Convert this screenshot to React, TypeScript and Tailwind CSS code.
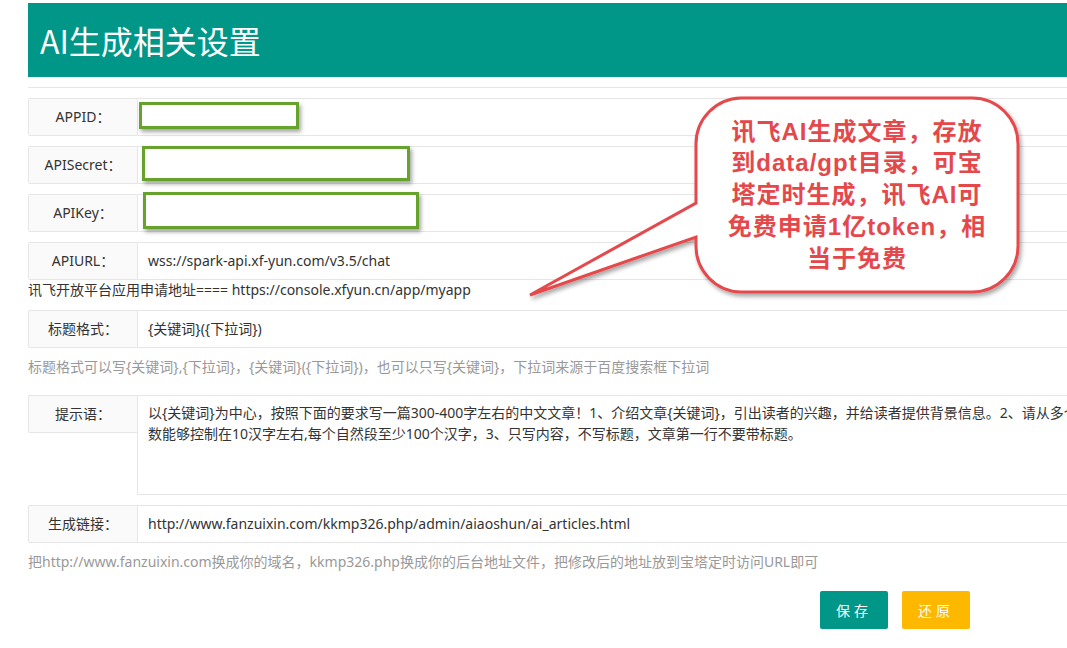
import React from "react";

const Row = ({
  label,
  value,
  overlay,
}: {
  label: string;
  value?: string;
  overlay?: string;
}) => (
  <div className="flex h-[38px] mb-[10px]">
    <div className="w-[110px] shrink-0 border border-[#e6e6e6] bg-[#fafafa] rounded-l-[2px] text-center leading-[36px] text-[14px] text-[#333]">
      {label}
    </div>
    <div className="relative flex-1 border border-l-0 border-[#e6e6e6] bg-white pl-[10px] leading-[36px] text-[14px] text-[#333]">
      {value}
      {overlay && (
        <div
          className={`absolute border-[3px] border-[#65a32d] bg-white shadow-[2px_3px_4px_rgba(0,0,0,0.35)] ${overlay}`}
        />
      )}
    </div>
  </div>
);

const Callout = () => (
  <>
    <svg
      className="absolute left-[520px] top-[90px] pointer-events-none"
      width="510"
      height="215"
      viewBox="520 90 510 215"
    >
      <defs>
        <filter id="sh" x="-10%" y="-10%" width="130%" height="130%">
          <feDropShadow dx="2" dy="3" stdDeviation="2" floodColor="#000" floodOpacity="0.35" />
        </filter>
      </defs>
      <path
        d="M741 98 H972 A46 46 0 0 1 1018 144 V246 A46 46 0 0 1 972 292 H741 A46 46 0 0 1 696 246 V237 L530 295 L696 203 V144 A46 46 0 0 1 741 98 Z"
        fill="#fff"
        stroke="#e5484b"
        strokeWidth="3"
        strokeLinejoin="miter"
        filter="url(#sh)"
      />
    </svg>
    <div className="absolute left-[696px] top-[98px] w-[322px] h-[194px] flex flex-col items-center justify-center font-['Liberation_Sans','Noto_Sans_CJK_SC',sans-serif] font-bold text-[24px] leading-[31.7px] tracking-[1px] text-[#e5484b] text-center">
      <div>讯飞AI生成文章，存放</div>
      <div>到data/gpt目录，可宝</div>
      <div>塔定时生成，讯飞AI可</div>
      <div>免费申请1亿token，相</div>
      <div>当于免费</div>
    </div>
  </>
);

export default function App() {
  return (
    <div className="relative w-[1067px] h-[648px] overflow-hidden bg-white font-['Noto_Sans','Noto_Sans_CJK_SC',sans-serif]">
      <div className="pl-[28px] pt-[3px] w-[1200px]">
        <div className="h-[74px] bg-[#009688] pl-[12px] flex items-center text-[32px] text-white font-['Noto_Sans_CJK_SC',sans-serif]">
          AI生成相关设置
        </div>
        <div className="mt-[10px] h-px bg-[#e6e6e6]" />
        <div className="mt-[10px]">
          <Row label="APPID：" overlay="left-[1px] top-[3px] w-[160px] h-[27px]" />
          <Row label="APISecret：" overlay="left-[4px] top-[-1px] w-[268px] h-[35px]" />
          <Row label="APIKey：" overlay="left-[5px] top-[-3px] w-[276px] h-[37px]" />
          <div className="flex h-[38px]">
            <div className="w-[110px] shrink-0 border border-[#e6e6e6] bg-[#fafafa] rounded-l-[2px] text-center leading-[36px] text-[14px] text-[#333]">
              APIURL：
            </div>
            <div className="flex-1 border border-l-0 border-[#e6e6e6] pl-[10px] leading-[36px] text-[14px] text-[#333]">
              wss://spark-api.xf-yun.com/v3.5/chat
            </div>
          </div>
          <div className="leading-[20px] text-[14px] text-[#333]">
            讯飞开放平台应用申请地址==== https://console.xfyun.cn/app/myapp
          </div>
          <div className="mt-[10px]">
            <div className="flex h-[38px]">
              <div className="w-[110px] shrink-0 border border-[#e6e6e6] bg-[#fafafa] rounded-l-[2px] text-center leading-[36px] text-[14px] text-[#333]">
                标题格式：
              </div>
              <div className="flex-1 border border-l-0 border-[#e6e6e6] pl-[10px] leading-[36px] text-[14px] text-[#333]">
                {"{关键词}({下拉词})"}
              </div>
            </div>
            <div className="py-[9px] leading-[20px] text-[14px] text-[#999]">
              {"标题格式可以写{关键词},{下拉词}，{关键词}({下拉词})，也可以只写{关键词}，下拉词来源于百度搜索框下拉词"}
            </div>
          </div>
          <div className="mt-[9px] flex">
            <div className="w-[109px] h-[38px] shrink-0 border border-r-0 border-[#e6e6e6] bg-[#fafafa] rounded-l-[2px] text-center leading-[36px] text-[14px] text-[#333]">
              提示语：
            </div>
            <div className="flex-1 h-[100px] border border-[#e6e6e6] px-[10px] py-[6px] leading-[21px] text-[14px] text-[#333] whitespace-nowrap">
              <div>
                {"以{关键词}为中心，按照下面的要求写一篇300-400字左右的中文文章！1、介绍文章{关键词}，引出读者的兴趣，并给读者提供背景信息。2、请从多个角度展开论述，每个段落的小标题字"}
              </div>
              <div>
                数能够控制在10汉字左右,每个自然段至少100个汉字，3、只写内容，不写标题，文章第一行不要带标题。
              </div>
            </div>
          </div>
          <div className="mt-[10px] flex h-[38px]">
            <div className="w-[110px] shrink-0 border border-[#e6e6e6] bg-[#fafafa] rounded-l-[2px] text-center leading-[36px] text-[14px] text-[#333]">
              生成链接：
            </div>
            <div className="flex-1 border border-l-0 border-[#e6e6e6] pl-[10px] leading-[36px] text-[14px] text-[#333]">
              http://www.fanzuixin.com/kkmp326.php/admin/aiaoshun/ai_articles.html
            </div>
          </div>
          <div className="py-[9px] leading-[20px] text-[14px] text-[#999]">
            把http://www.fanzuixin.com换成你的域名，kkmp326.php换成你的后台地址文件，把修改后的地址放到宝塔定时访问URL即可
          </div>
          <div className="mt-[10px] flex gap-[14px] pl-[792px]">
            <button className="w-[68px] h-[38px] rounded-[2px] bg-[#009688] text-white text-[14px] tracking-[4px]">
              保存
            </button>
            <button className="w-[68px] h-[38px] rounded-[2px] bg-[#ffb800] text-white text-[14px] tracking-[4px]">
              还原
            </button>
          </div>
        </div>
      </div>
      <Callout />
    </div>
  );
}
